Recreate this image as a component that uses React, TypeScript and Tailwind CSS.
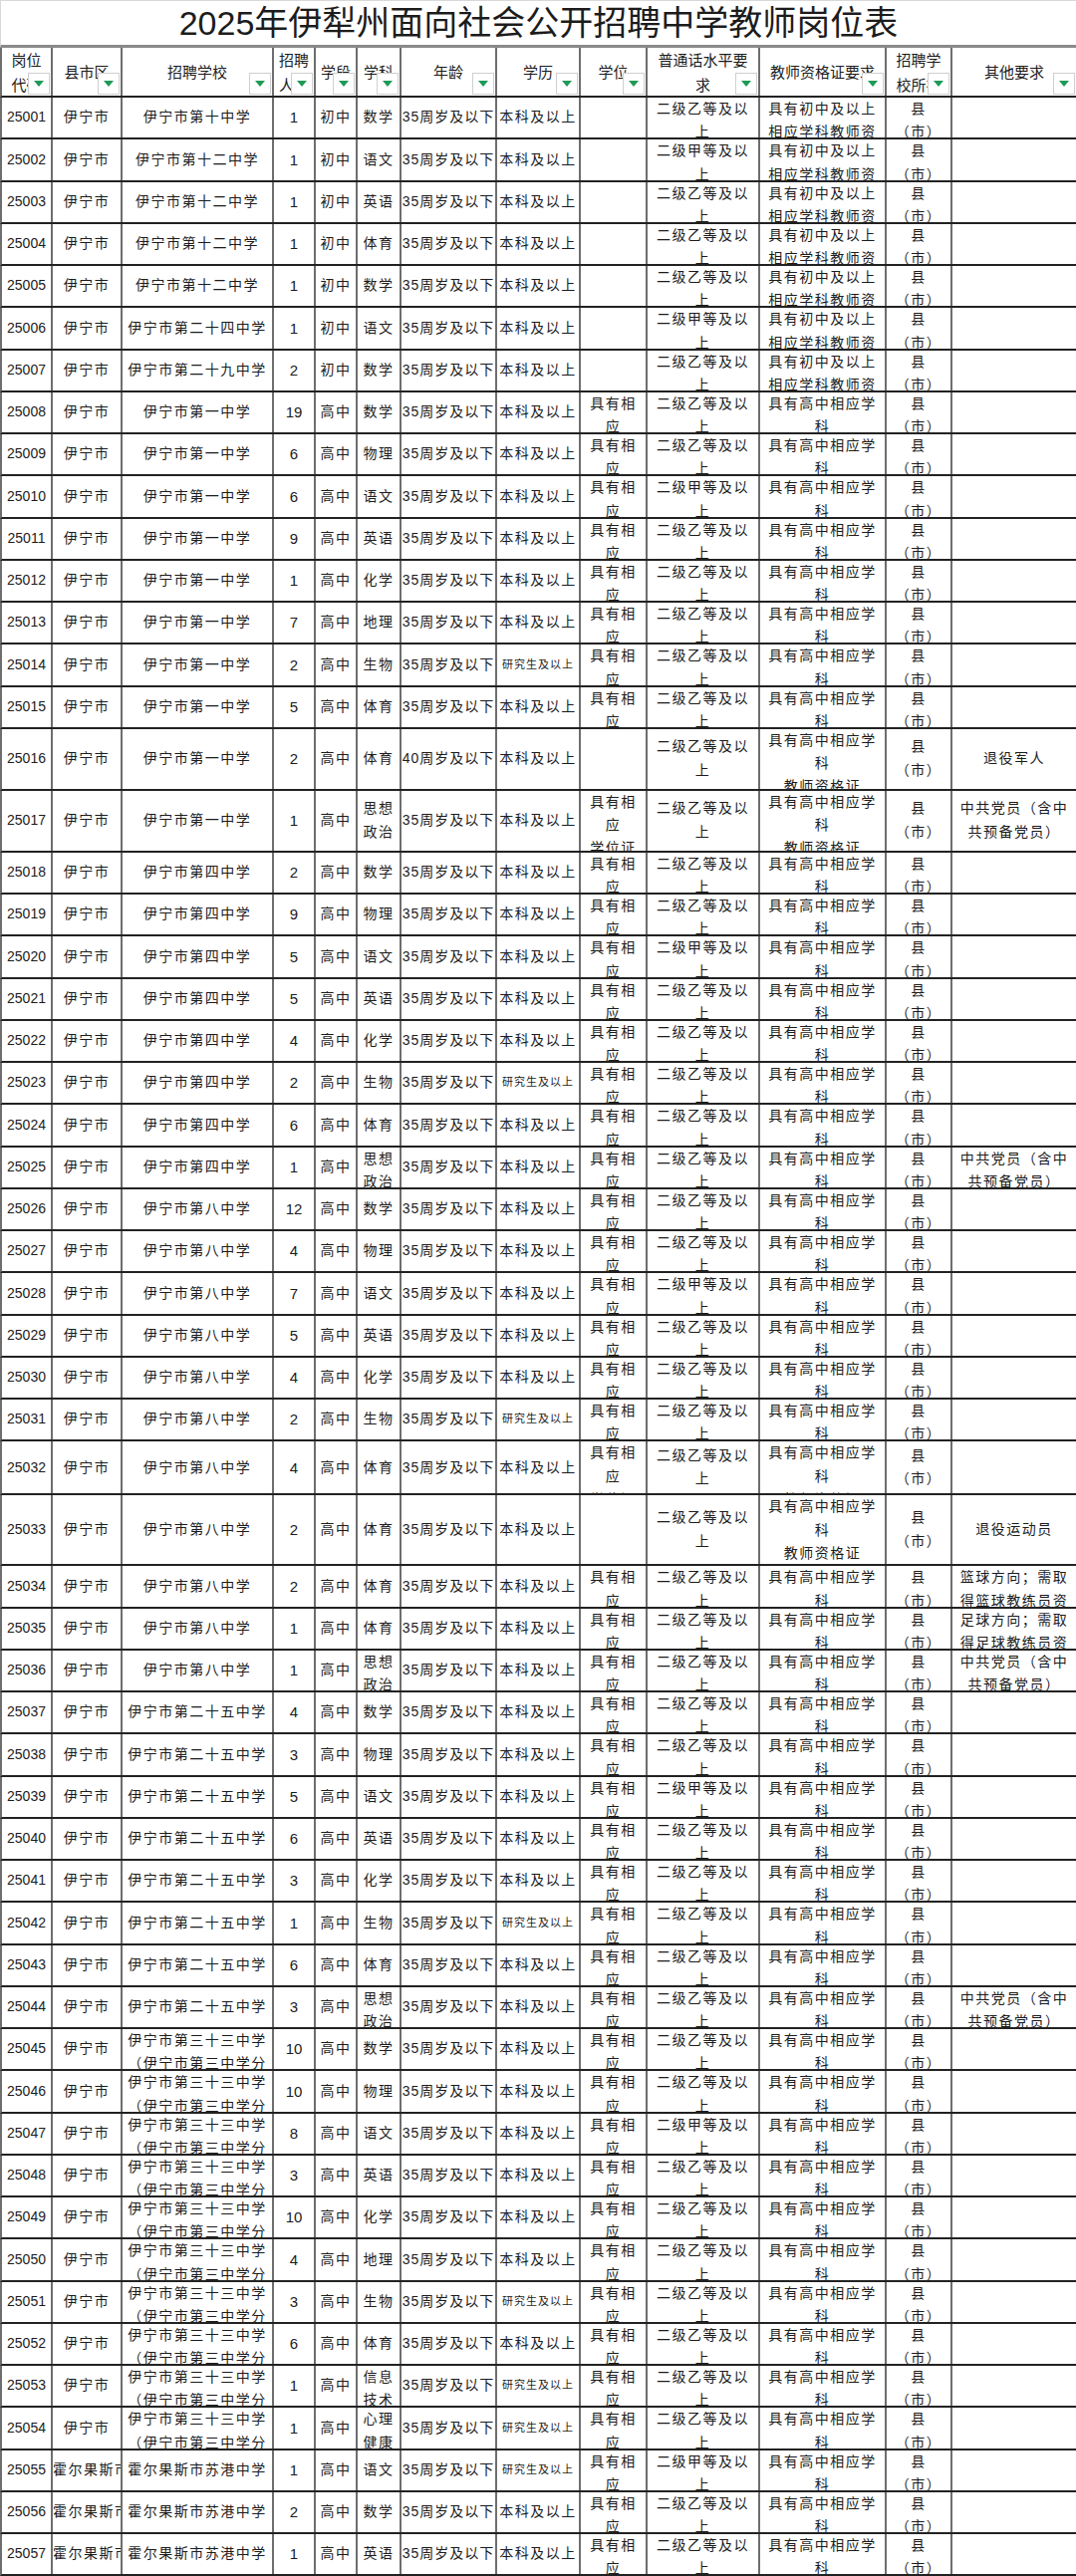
import React from 'react';

// 13 columns of the sheet, widths taken from the screenshot
const COLS =
  'grid grid-cols-[51px_70px_152px_42px_42px_44px_96px_84px_67px_113px_127px_66px_126px]';

const LINE = 23.3;

const SCHOOLS: Record<string, string[]> = {
  S10: ['伊宁市第十中学'],
  S12: ['伊宁市第十二中学'],
  S24: ['伊宁市第二十四中学'],
  S29: ['伊宁市第二十九中学'],
  S1: ['伊宁市第一中学'],
  S4: ['伊宁市第四中学'],
  S8: ['伊宁市第八中学'],
  S25: ['伊宁市第二十五中学'],
  S33: ['伊宁市第三十三中学', '（伊宁市第三中学分', '校）'],
  HS: ['霍尔果斯市苏港中学'],
};

const SUBJECTS: Record<string, string[]> = {
  思想政治: ['思想', '政治'],
  信息技术: ['信息', '技术'],
  心理健康: ['心理', '健康'],
};

const CERTS: Record<string, string[]> = {
  c: ['具有初中及以上', '相应学科教师资', '格证'],
  g: ['具有高中相应学', '科', '教师资格证'],
};

const OTHERS: Record<string, string[]> = {
  '': [],
  J: ['退役军人'],
  D: ['中共党员（含中', '共预备党员）'],
  Y: ['退役运动员'],
  L: ['篮球方向；需取', '得篮球教练员资', '格证'],
  Z: ['足球方向；需取', '得足球教练员资', '格证'],
};

const HEIGHTS: Record<string, { cls: string; px: number }> = {
  '': { cls: 'h-[42.25px]', px: 42.25 },
  a: { cls: 'h-[62px]', px: 62 },
  b: { cls: 'h-[54px]', px: 54 },
  c: { cls: 'h-[71px]', px: 71 },
};

// code, county, school, count, stage, subject, age, edu(b/y), degree, 普通话, cert, other, height
type Row = [string, string, string, string, string, string, string, string, string, string, string, string, string];

const ROWS: Row[] = [
  ['25001', '伊宁市', 'S10', '1', '初中', '数学', '35', 'b', '', '乙', 'c', '', ''],
  ['25002', '伊宁市', 'S12', '1', '初中', '语文', '35', 'b', '', '甲', 'c', '', ''],
  ['25003', '伊宁市', 'S12', '1', '初中', '英语', '35', 'b', '', '乙', 'c', '', ''],
  ['25004', '伊宁市', 'S12', '1', '初中', '体育', '35', 'b', '', '乙', 'c', '', ''],
  ['25005', '伊宁市', 'S12', '1', '初中', '数学', '35', 'b', '', '乙', 'c', '', ''],
  ['25006', '伊宁市', 'S24', '1', '初中', '语文', '35', 'b', '', '甲', 'c', '', ''],
  ['25007', '伊宁市', 'S29', '2', '初中', '数学', '35', 'b', '', '乙', 'c', '', ''],
  ['25008', '伊宁市', 'S1', '19', '高中', '数学', '35', 'b', 'y', '乙', 'g', '', ''],
  ['25009', '伊宁市', 'S1', '6', '高中', '物理', '35', 'b', 'y', '乙', 'g', '', ''],
  ['25010', '伊宁市', 'S1', '6', '高中', '语文', '35', 'b', 'y', '甲', 'g', '', ''],
  ['25011', '伊宁市', 'S1', '9', '高中', '英语', '35', 'b', 'y', '乙', 'g', '', ''],
  ['25012', '伊宁市', 'S1', '1', '高中', '化学', '35', 'b', 'y', '乙', 'g', '', ''],
  ['25013', '伊宁市', 'S1', '7', '高中', '地理', '35', 'b', 'y', '乙', 'g', '', ''],
  ['25014', '伊宁市', 'S1', '2', '高中', '生物', '35', 'y', 'y', '乙', 'g', '', ''],
  ['25015', '伊宁市', 'S1', '5', '高中', '体育', '35', 'b', 'y', '乙', 'g', '', ''],
  ['25016', '伊宁市', 'S1', '2', '高中', '体育', '40', 'b', '', '乙', 'g', 'J', 'a'],
  ['25017', '伊宁市', 'S1', '1', '高中', '思想政治', '35', 'b', 'y', '乙', 'g', 'D', 'a'],
  ['25018', '伊宁市', 'S4', '2', '高中', '数学', '35', 'b', 'y', '乙', 'g', '', ''],
  ['25019', '伊宁市', 'S4', '9', '高中', '物理', '35', 'b', 'y', '乙', 'g', '', ''],
  ['25020', '伊宁市', 'S4', '5', '高中', '语文', '35', 'b', 'y', '甲', 'g', '', ''],
  ['25021', '伊宁市', 'S4', '5', '高中', '英语', '35', 'b', 'y', '乙', 'g', '', ''],
  ['25022', '伊宁市', 'S4', '4', '高中', '化学', '35', 'b', 'y', '乙', 'g', '', ''],
  ['25023', '伊宁市', 'S4', '2', '高中', '生物', '35', 'y', 'y', '乙', 'g', '', ''],
  ['25024', '伊宁市', 'S4', '6', '高中', '体育', '35', 'b', 'y', '乙', 'g', '', ''],
  ['25025', '伊宁市', 'S4', '1', '高中', '思想政治', '35', 'b', 'y', '乙', 'g', 'D', ''],
  ['25026', '伊宁市', 'S8', '12', '高中', '数学', '35', 'b', 'y', '乙', 'g', '', ''],
  ['25027', '伊宁市', 'S8', '4', '高中', '物理', '35', 'b', 'y', '乙', 'g', '', ''],
  ['25028', '伊宁市', 'S8', '7', '高中', '语文', '35', 'b', 'y', '甲', 'g', '', ''],
  ['25029', '伊宁市', 'S8', '5', '高中', '英语', '35', 'b', 'y', '乙', 'g', '', ''],
  ['25030', '伊宁市', 'S8', '4', '高中', '化学', '35', 'b', 'y', '乙', 'g', '', ''],
  ['25031', '伊宁市', 'S8', '2', '高中', '生物', '35', 'y', 'y', '乙', 'g', '', ''],
  ['25032', '伊宁市', 'S8', '4', '高中', '体育', '35', 'b', 'y', '乙', 'g', '', 'b'],
  ['25033', '伊宁市', 'S8', '2', '高中', '体育', '35', 'b', '', '乙', 'g', 'Y', 'c'],
  ['25034', '伊宁市', 'S8', '2', '高中', '体育', '35', 'b', 'y', '乙', 'g', 'L', ''],
  ['25035', '伊宁市', 'S8', '1', '高中', '体育', '35', 'b', 'y', '乙', 'g', 'Z', ''],
  ['25036', '伊宁市', 'S8', '1', '高中', '思想政治', '35', 'b', 'y', '乙', 'g', 'D', ''],
  ['25037', '伊宁市', 'S25', '4', '高中', '数学', '35', 'b', 'y', '乙', 'g', '', ''],
  ['25038', '伊宁市', 'S25', '3', '高中', '物理', '35', 'b', 'y', '乙', 'g', '', ''],
  ['25039', '伊宁市', 'S25', '5', '高中', '语文', '35', 'b', 'y', '甲', 'g', '', ''],
  ['25040', '伊宁市', 'S25', '6', '高中', '英语', '35', 'b', 'y', '乙', 'g', '', ''],
  ['25041', '伊宁市', 'S25', '3', '高中', '化学', '35', 'b', 'y', '乙', 'g', '', ''],
  ['25042', '伊宁市', 'S25', '1', '高中', '生物', '35', 'y', 'y', '乙', 'g', '', ''],
  ['25043', '伊宁市', 'S25', '6', '高中', '体育', '35', 'b', 'y', '乙', 'g', '', ''],
  ['25044', '伊宁市', 'S25', '3', '高中', '思想政治', '35', 'b', 'y', '乙', 'g', 'D', ''],
  ['25045', '伊宁市', 'S33', '10', '高中', '数学', '35', 'b', 'y', '乙', 'g', '', ''],
  ['25046', '伊宁市', 'S33', '10', '高中', '物理', '35', 'b', 'y', '乙', 'g', '', ''],
  ['25047', '伊宁市', 'S33', '8', '高中', '语文', '35', 'b', 'y', '甲', 'g', '', ''],
  ['25048', '伊宁市', 'S33', '3', '高中', '英语', '35', 'b', 'y', '乙', 'g', '', ''],
  ['25049', '伊宁市', 'S33', '10', '高中', '化学', '35', 'b', 'y', '乙', 'g', '', ''],
  ['25050', '伊宁市', 'S33', '4', '高中', '地理', '35', 'b', 'y', '乙', 'g', '', ''],
  ['25051', '伊宁市', 'S33', '3', '高中', '生物', '35', 'y', 'y', '乙', 'g', '', ''],
  ['25052', '伊宁市', 'S33', '6', '高中', '体育', '35', 'b', 'y', '乙', 'g', '', ''],
  ['25053', '伊宁市', 'S33', '1', '高中', '信息技术', '35', 'y', 'y', '乙', 'g', '', ''],
  ['25054', '伊宁市', 'S33', '1', '高中', '心理健康', '35', 'y', 'y', '乙', 'g', '', ''],
  ['25055', '霍尔果斯市', 'HS', '1', '高中', '语文', '35', 'y', 'y', '甲', 'g', '', ''],
  ['25056', '霍尔果斯市', 'HS', '2', '高中', '数学', '35', 'b', 'y', '乙', 'g', '', ''],
  ['25057', '霍尔果斯市', 'HS', '1', '高中', '英语', '35', 'b', 'y', '乙', 'g', '', ''],
];

const HEADERS: string[][] = [
  ['岗位', '代码'],
  ['县市区'],
  ['招聘学校'],
  ['招聘', '人数'],
  ['学段'],
  ['学科'],
  ['年龄'],
  ['学历'],
  ['学位'],
  ['普通话水平要', '求'],
  ['教师资格证要求'],
  ['招聘学', '校所在'],
  ['其他要求'],
];

// Excel-like cell: centred when it fits, top-aligned and clipped when it does not.
// Lines that would start below the cell are dropped, they are never visible.
function Cell({ lines, h, className = '' }: { lines: string[]; h: number; className?: string }) {
  const fits = lines.length * LINE <= h - 1;
  const shown = fits ? lines : lines.filter((_, i) => i * LINE < h - 4);
  return (
    <div
      className={`flex flex-col overflow-hidden border-r-2 border-[#6e6e6e] [align-items:safe_center] [justify-content:safe_center] ${className}`}
    >
      {shown.map((l, i) => (
        <div key={i} className="whitespace-nowrap leading-[23.3px]">
          {l}
        </div>
      ))}
    </div>
  );
}

function FilterButton() {
  return (
    <span className="absolute bottom-px right-px flex h-[22px] w-[22px] items-center justify-center border border-[#cfcfcf] bg-white">
      <span className="h-0 w-0 border-x-[5px] border-t-[6px] border-x-transparent border-t-[#1e9a56]" />
    </span>
  );
}

export default function App() {
  return (
    <div className="w-[1080px] bg-white text-[#1c1c1c] [font-family:'Liberation_Sans','Noto_Sans_CJK_SC',sans-serif]">
      <div className="flex h-[48px] items-center justify-center border-b-[3px] border-l border-t border-[#8a8a8a] border-l-[#d8d8d8] border-t-[#d8d8d8] text-[34px] leading-none">
        2025年伊犁州面向社会公开招聘中学教师岗位表
      </div>

      <div className={`${COLS} h-[50px] border-b-2 border-l-2 border-[#222] border-l-[#6e6e6e] text-[15px]`}>
        {HEADERS.map((h, i) => (
          <div
            key={i}
            className="relative flex flex-col overflow-hidden border-r-2 border-[#6e6e6e] [align-items:safe_center] [justify-content:safe_center]"
          >
            {h.map((l, j) => (
              <div key={j} className="whitespace-nowrap leading-[25px]">
                {l}
              </div>
            ))}
            <FilterButton />
          </div>
        ))}
      </div>

      {ROWS.map((r) => {
        const [code, county, school, n, stage, subj, age, edu, deg, pth, cert, other, hk] = r;
        const { cls, px } = HEIGHTS[hk];
        return (
          <div
            key={code}
            className={`${COLS} ${cls} border-b-2 border-l-2 border-[#222] border-l-[#6e6e6e] text-[14px] tracking-[1.5px]`}
          >
            <Cell h={px} lines={[code]} className="tracking-normal text-[14px]" />
            <Cell h={px} lines={[county]} />
            <Cell h={px} lines={SCHOOLS[school]} />
            <Cell h={px} lines={[n]} className="tracking-normal text-[15px]" />
            <Cell h={px} lines={[stage]} />
            <Cell h={px} lines={SUBJECTS[subj] ?? [subj]} />
            <Cell h={px} lines={[`${age}周岁及以下`]} className="tracking-[1px]" />
            {edu === 'y' ? (
              <Cell h={px} lines={['研究生及以上']} className="text-[11px] tracking-[1px]" />
            ) : (
              <Cell h={px} lines={['本科及以上']} />
            )}
            <Cell h={px} lines={deg ? ['具有相', '应', '学位证'] : []} />
            <Cell h={px} lines={[`二级${pth}等及以`, '上']} />
            <Cell h={px} lines={CERTS[cert]} />
            <Cell h={px} lines={['县', '（市）']} />
            <Cell h={px} lines={OTHERS[other]} />
          </div>
        );
      })}
    </div>
  );
}
